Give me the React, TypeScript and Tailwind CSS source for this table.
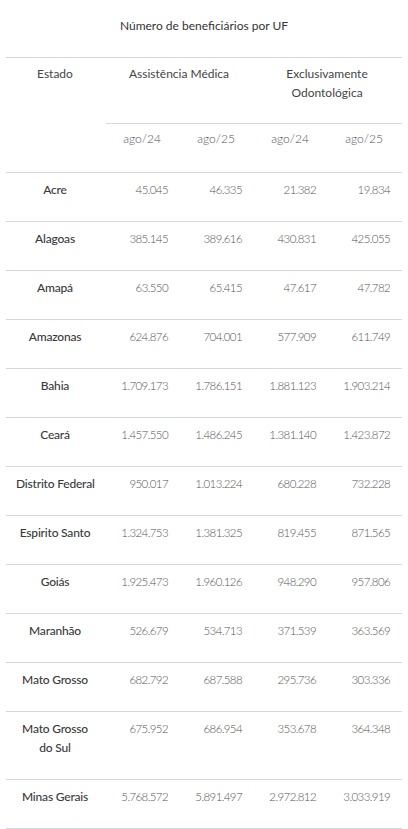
const rows: { uf: string; v: string[] }[] = [
  { uf: 'Acre', v: ['45.045', '46.335', '21.382', '19.834'] },
  { uf: 'Alagoas', v: ['385.145', '389.616', '430.831', '425.055'] },
  { uf: 'Amapá', v: ['63.550', '65.415', '47.617', '47.782'] },
  { uf: 'Amazonas', v: ['624.876', '704.001', '577.909', '611.749'] },
  { uf: 'Bahia', v: ['1.709.173', '1.786.151', '1.881.123', '1.903.214'] },
  { uf: 'Ceará', v: ['1.457.550', '1.486.245', '1.381.140', '1.423.872'] },
  { uf: 'Distrito Federal', v: ['950.017', '1.013.224', '680.228', '732.228'] },
  { uf: 'Espirito Santo', v: ['1.324.753', '1.381.325', '819.455', '871.565'] },
  { uf: 'Goiás', v: ['1.925.473', '1.960.126', '948.290', '957.806'] },
  { uf: 'Maranhão', v: ['526.679', '534.713', '371.539', '363.569'] },
  { uf: 'Mato Grosso', v: ['682.792', '687.588', '295.736', '303.336'] },
  { uf: 'Mato Grosso\ndo Sul', v: ['675.952', '686.954', '353.678', '364.348'] },
  { uf: 'Minas Gerais', v: ['5.768.572', '5.891.497', '2.972.812', '3.033.919'] },
];

const cell = 'pl-[10px] pr-[12px] align-top';

export default function App() {
  return (
    <div className="min-h-screen bg-white px-[6px] font-['Lato','Liberation_Sans',sans-serif] text-[12px] leading-[19px] text-[#444]">
      <table className="w-[396px] table-fixed border-collapse">
        <caption className="h-[57px] pt-[16px] text-center text-[12px] text-[#333]">
          Número de beneficiários por UF
        </caption>
        <colgroup>
          <col className="w-[100px]" />
          <col className="w-[74px]" />
          <col className="w-[74px]" />
          <col className="w-[74px]" />
          <col className="w-[74px]" />
        </colgroup>
        <thead>
          <tr className="border-t border-[#d5d9dd]">
            <th rowSpan={2} className={`${cell} pt-[6px] pb-[21px] text-center font-normal`}>Estado</th>
            <th colSpan={2} className={`${cell} pt-[6px] pb-[21px] text-center font-normal`}>Assistência Médica</th>
            <th colSpan={2} className={`${cell} pt-[6px] pb-[21px] text-center font-normal`}>
              Exclusivamente
              <br />
              Odontológica
            </th>
          </tr>
          <tr className="border-t border-[#d5d9dd]">
            {['ago/24', 'ago/25', 'ago/24', 'ago/25'].map((h, i) => (
              <th key={i} className={`${cell} pt-[5px] pb-[24px] text-center font-light text-[#555]`}>{h}</th>
            ))}
          </tr>
        </thead>
        <tbody>
          {rows.map((r) => (
            <tr key={r.uf} className="border-t border-b border-[#d5d9dd]">
              <td className={`${cell} pt-[7px] pb-[22px] whitespace-pre text-center font-medium tracking-[-0.2px] text-[#3a3a3a]`}>{r.uf}</td>
              {r.v.map((n, i) => (
                <td key={i} className={`${cell} pt-[7px] pb-[22px] text-right text-[11.5px] font-light tracking-[-0.6px] text-[#555]`}>{n}</td>
              ))}
            </tr>
          ))}
        </tbody>
      </table>
    </div>
  );
}
